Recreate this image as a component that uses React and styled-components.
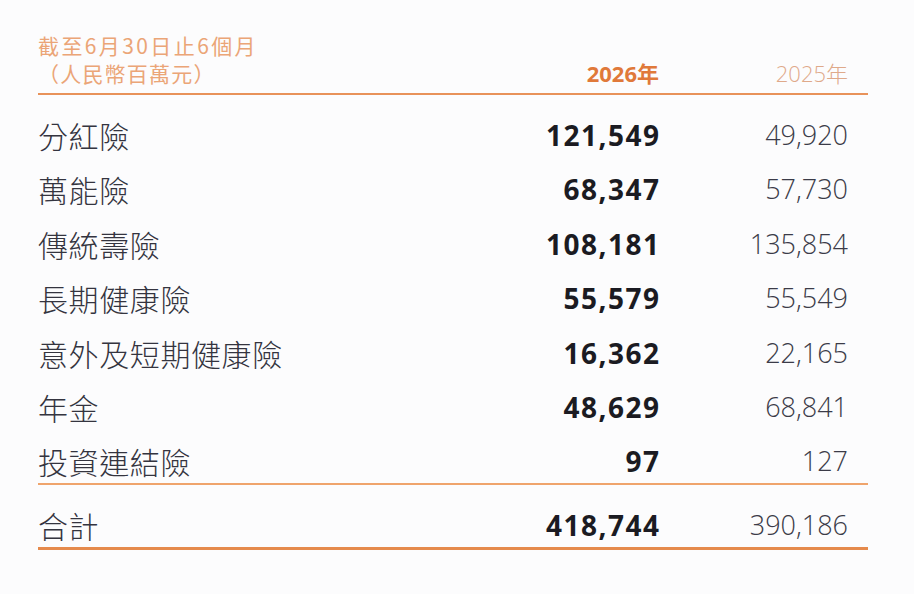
import React from 'react';
import styled, { createGlobalStyle } from 'styled-components';

const GlobalStyle = createGlobalStyle`
  html, body {
    margin: 0;
    padding: 0;
    background: #fcfcfd;
  }
  body {
    font-family: "Open Sans", "Noto Sans CJK TC", sans-serif;
  }
`;

const Page = styled.div`
  width: 914px;
  height: 594px;
  box-sizing: border-box;
  padding: 31px 46px 0 38px;
  background: #fcfcfd;
`;

const Grid = styled.div`
  display: grid;
  grid-template-columns: 1fr 200px 189px;
  padding-right: 20px;
`;

const HeadRow = styled(Grid)`
  padding-bottom: 6px;
  border-bottom: 2px solid #e8925a;
`;

const Caption = styled.div`
  font-family: "Noto Sans CJK TC", sans-serif;
  font-size: 21px;
  line-height: 28px;
  letter-spacing: ${p => (p.$wide ? 2.4 : 1.2)}px;
  color: #eba577;
  font-weight: 400;
`;

const YearCell = styled.div`
  align-self: end;
  text-align: right;
  font-family: "Open Sans", "Noto Sans CJK TC", sans-serif;
  font-size: 22px;
  line-height: 28px;
  font-weight: ${p => (p.$current ? 700 : 300)};
  color: ${p => (p.$current ? '#e0793a' : '#dfa98a')};
`;

const Body = styled.div`
  padding-top: 13px;
  border-bottom: 2px solid #efa46c;
`;

const Row = styled(Grid)`
  height: 54.4px;
  box-sizing: border-box;
  padding-top: ${p => (p.$total ? 26 : 13)}px;
  align-items: start;
  &:last-child {
    height: ${p => (p.$total ? 62 : 49)}px;
  }
`;

const Total = styled.div`
  border-bottom: 3px solid #e58a4c;
`;

const Label = styled.div`
  font-family: "Noto Sans CJK TC", sans-serif;
  font-size: 30px;
  line-height: 28px;
  letter-spacing: 0.6px;
  font-weight: 300;
  color: #34343f;
`;

const Num = styled.div`
  text-align: right;
  font-family: "Open Sans", sans-serif;
  font-size: ${p => (p.$bold ? 28 : 27)}px;
  line-height: 28px;
  font-weight: ${p => (p.$bold ? 700 : 300)};
  color: ${p => (p.$bold ? '#1b1b22' : '#3b3b48')};
  letter-spacing: ${p => (p.$bold ? '1.5px' : '0')};
  margin-right: ${p => (p.$bold ? '-1.5px' : '0')};
`;

const rows = [
  ['分紅險', '121,549', '49,920'],
  ['萬能險', '68,347', '57,730'],
  ['傳統壽險', '108,181', '135,854'],
  ['長期健康險', '55,579', '55,549'],
  ['意外及短期健康險', '16,362', '22,165'],
  ['年金', '48,629', '68,841'],
  ['投資連結險', '97', '127'],
];

export default function App() {
  return (
    <Page>
      <GlobalStyle />
      <HeadRow>
        <div>
          <Caption $wide>截至6月30日止6個月</Caption>
          <Caption>（人民幣百萬元）</Caption>
        </div>
        <YearCell $current>2026年</YearCell>
        <YearCell>2025年</YearCell>
      </HeadRow>
      <Body>
        {rows.map(r => (
          <Row key={r[0]}>
            <Label>{r[0]}</Label>
            <Num $bold>{r[1]}</Num>
            <Num>{r[2]}</Num>
          </Row>
        ))}
      </Body>
      <Total>
        <Row $total>
          <Label>合計</Label>
          <Num $bold>418,744</Num>
          <Num>390,186</Num>
        </Row>
      </Total>
    </Page>
  );
}
